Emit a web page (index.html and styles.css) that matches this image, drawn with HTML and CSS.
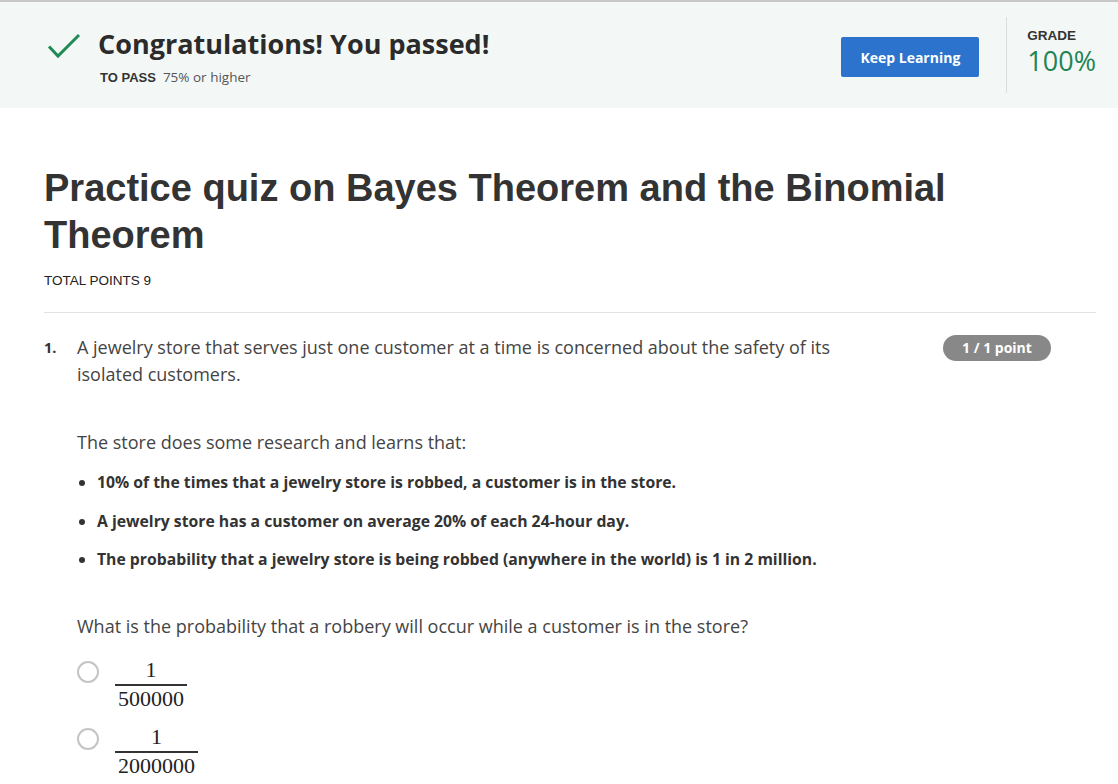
FILE: index.html
```html
<!DOCTYPE html>
<html>
<head>
<meta charset="utf-8">
<link rel="stylesheet" href="styles.css">
</head>
<body>
<header class="banner">
  <div class="banner-main">
    <svg class="check" width="34" height="26" viewBox="0 0 34 26"><path d="M2 13.5 L11 23 L32 2" fill="none" stroke="#1f8a55" stroke-width="3"/></svg>
    <div class="banner-text">
      <h2 class="congrats">Congratulations! You passed!</h2>
      <div class="topass"><span class="topass-label">TO PASS</span><span class="topass-val">75% or higher</span></div>
    </div>
  </div>
  <button class="keep">Keep Learning</button>
  <div class="divider"></div>
  <div class="grade">
    <div class="grade-label">GRADE</div>
    <div class="grade-val">100%</div>
  </div>
</header>

<main class="content">
  <h1 class="title">Practice quiz on Bayes Theorem and the Binomial Theorem</h1>
  <div class="total">TOTAL POINTS 9</div>
  <hr class="rule">

  <section class="question">
    <div class="qnum">1.</div>
    <div class="qbody">
      <p class="qtext">A jewelry store that serves just one customer at a time is concerned about the safety of its isolated customers.</p>
      <p class="qtext lead">The store does some research and learns that:</p>
      <ul class="facts">
        <li>10% of the times that a jewelry store is robbed, a customer is in the store.</li>
        <li>A jewelry store has a customer on average 20% of each 24-hour day.</li>
        <li>The probability that a jewelry store is being robbed (anywhere in the world) is 1 in 2 million.</li>
      </ul>
      <p class="qtext ask">What is the probability that a robbery will occur while a customer is in the store?</p>
      <div class="options">
        <label class="option"><span class="radio"></span><span class="frac"><span class="num">1</span><span class="den">500000</span></span></label>
        <label class="option"><span class="radio"></span><span class="frac"><span class="num">1</span><span class="den">2000000</span></span></label>
      </div>
    </div>
    <div class="badge">1 / 1 point</div>
  </section>
</main>
</body>
</html>
```

FILE: styles.css
```css
html, body {
  margin: 0;
  padding: 0;
  background: #fff;
}
body {
  font-family: "Open Sans", "Liberation Sans", sans-serif;
  color: #333;
  overflow: hidden;
}
.banner {
  border-top: 2px solid #c8c8c8;
  background: #f3f8f7;
  height: 108px;
  display: flex;
  align-items: flex-start;
  padding: 0 22px 0 47px;
  box-sizing: border-box;
}
.banner-main {
  display: flex;
  align-items: flex-start;
  flex: 1;
  padding-top: 25px;
}
.check {
  margin-top: 6px;
  margin-right: 17px;
}
.congrats {
  margin: 0;
  font-size: 27px;
  font-weight: 700;
  line-height: 34px;
  color: #2b2b2b;
}
.topass {
  margin-top: 6px;
  margin-left: 2px;
  font-size: 13.5px;
  line-height: 20px;
}
.topass-label {
  font-family: "Liberation Sans", Arial, sans-serif;
  font-weight: 700;
  font-size: 13px;
  color: #333;
  margin-right: 7px;
}
.topass-val {
  color: #555;
}
.keep {
  margin-top: 35px;
  width: 138px;
  height: 40px;
  background: #2b73cc;
  color: #fff;
  border: none;
  border-radius: 2px;
  font-family: "Open Sans", sans-serif;
  font-weight: 700;
  font-size: 14px;
  padding: 0;
}
.divider {
  width: 1px;
  background: #dcdcdc;
  height: 76px;
  margin-top: 15px;
  margin-left: 27px;
  margin-right: 20px;
}
.grade {
  padding-top: 26px;
}
.grade-label {
  font-family: "Liberation Sans", Arial, sans-serif;
  font-weight: 700;
  font-size: 13.5px;
  color: #333;
  line-height: 16px;
}
.grade-val {
  font-size: 27px;
  color: #1f8354;
  line-height: 34px;
  margin-top: 0;
}
.content {
  padding: 0 22px 0 44px;
}
.title {
  font-family: "Liberation Sans", Arial, sans-serif;
  font-size: 38px;
  font-weight: 700;
  line-height: 47px;
  color: #333;
  margin: 57px 0 0;
}
.total {
  font-family: "Liberation Sans", Arial, sans-serif;
  font-size: 13.5px;
  color: #222;
  margin-top: 13px;
  line-height: 18px;
}
.rule {
  border: none;
  border-top: 1px solid #e2e2e2;
  margin: 22px 0 0;
}
.question {
  display: flex;
  align-items: flex-start;
  padding-top: 21px;
}
.qnum {
  width: 33px;
  font-weight: 700;
  font-size: 14.5px;
  line-height: 27px;
  color: #333;
}
.qbody {
  width: 790px;
}
.qtext {
  margin: 0;
  font-size: 18px;
  line-height: 27px;
  color: #444;
}
.lead {
  margin-top: 41px;
}
.facts {
  margin: 15px 0 0;
  padding-left: 20px;
}
.facts li {
  font-size: 15.75px;
  font-weight: 700;
  color: #333;
  line-height: 22px;
  margin-bottom: 16.5px;
}
.ask {
  margin-top: 43px;
}
.options {
  margin-top: 18px;
  display: flex;
  flex-direction: column;
  gap: 14px;
}
.option {
  display: flex;
  align-items: flex-start;
}
.radio {
  width: 18px;
  height: 18px;
  border: 2px solid #c4c4c4;
  border-radius: 50%;
  margin-top: 3px;
  margin-right: 16px;
  flex: none;
}
.frac {
  display: inline-flex;
  flex-direction: column;
  align-items: center;
  font-family: "Liberation Serif", "DejaVu Serif", serif;
  font-size: 22px;
  line-height: 24px;
  color: #222;
}
.num {
  padding: 0 4px 2px;
}
.den {
  border-top: 2px solid #333;
  padding: 1px 3px 0;
  line-height: 24px;
}
.badge {
  margin-left: auto;
  margin-right: 45px;
  margin-top: 1px;
  background: #888;
  color: #fff;
  font-size: 14px;
  font-weight: 700;
  border-radius: 13px;
  width: 108px;
  height: 26px;
  line-height: 26px;
  text-align: center;
}
```
